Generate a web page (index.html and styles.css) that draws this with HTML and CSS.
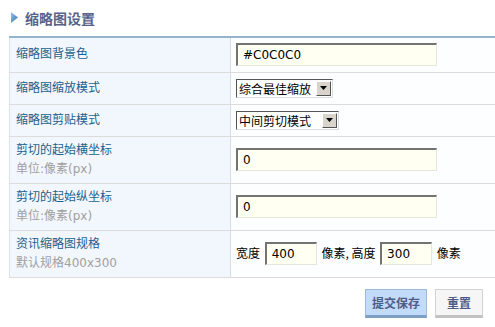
FILE: index.html
```html
<!DOCTYPE html>
<html lang="zh-CN">
<head>
  <meta charset="UTF-8">
  <title>缩略图设置</title>
  <link rel="stylesheet" href="styles.css">
</head>
<body>
  <div class="panel">
    <h3 class="panel-title">
      <svg class="arrow" width="7" height="11" viewBox="0 0 7 11">
        <defs>
          <linearGradient id="ag" x1="0" y1="0" x2="1" y2="1">
            <stop offset="0" stop-color="#9cc4ec"/>
            <stop offset="1" stop-color="#2f6fb8"/>
          </linearGradient>
        </defs>
        <polygon points="0,0 7,5.5 0,11" fill="url(#ag)"/>
      </svg>
      缩略图设置
    </h3>

    <!-- 设置表 -->
    <table class="form-table">
      <tr class="row-sm">
        <th>缩略图背景色</th>
        <td><input type="text" class="txt" value="#C0C0C0"></td>
      </tr>
      <tr class="row-xs">
        <th>缩略图缩放模式</th>
        <td>
          <span class="sel">
            <select><option>综合最佳缩放</option></select>
            <span class="sel-btn"><svg width="7" height="4" viewBox="0 0 7 4"><polygon points="0,0 7,0 3.5,4" fill="#000"/></svg></span>
          </span>
        </td>
      </tr>
      <tr class="row-xs">
        <th>缩略图剪贴模式</th>
        <td>
          <span class="sel sel-wide">
            <select><option>中间剪切模式</option></select>
            <span class="sel-btn"><svg width="7" height="4" viewBox="0 0 7 4"><polygon points="0,0 7,0 3.5,4" fill="#000"/></svg></span>
          </span>
        </td>
      </tr>
      <tr class="row-lg">
        <th>剪切的起始横坐标<span class="hint">单位:像素(px)</span></th>
        <td><input type="text" class="txt" value="0"></td>
      </tr>
      <tr class="row-lg">
        <th>剪切的起始纵坐标<span class="hint">单位:像素(px)</span></th>
        <td><input type="text" class="txt" value="0"></td>
      </tr>
      <tr class="row-lg">
        <th>资讯缩略图规格<span class="hint">默认规格400x300</span></th>
        <td class="size-cell">
          宽度 <input type="text" class="txt txt-sm" value="400"> 像素, 高度 <input type="text" class="txt txt-sm" value="300"> 像素
        </td>
      </tr>
    </table>

    <div class="actions">
      <button class="btn btn-primary">提交保存</button>
      <button class="btn">重置</button>
    </div>
  </div>
</body>
</html>
```

FILE: styles.css
```css
/* Reset minimal */
* { box-sizing: border-box; margin: 0; padding: 0; }

body {
  font-family: "DejaVu Sans", "Noto Sans CJK SC", sans-serif;
  font-size: 12px;
  color: #000;
  background: #fff;
}

.panel {
  padding-left: 9px;
}

/* Titre */
.panel-title {
  display: flex;
  align-items: center;
  gap: 7px;
  height: 36px;
  padding-left: 2px;
  padding-bottom: 1px;
  font-family: "Noto Sans CJK SC", sans-serif;
  font-size: 14px;
  font-weight: bold;
  color: #57628a;
}
.arrow { display: block; }

/* Table */
.form-table {
  width: 100%;
  border-collapse: collapse;
  border-top: 2px solid #93b4cc;
}
.form-table th,
.form-table td {
  border-bottom: 1px solid #dcdcdc;
  vertical-align: middle;
}
.form-table th {
  width: 221px;
  padding: 0 6px;
  text-align: left;
  font-weight: normal;
  color: #1d5f8c;
  line-height: 19px;
  background: #f2f7fd;
  border-left: 1px solid #dde3ea;
  border-right: 1px solid #d3dde8;
}
.form-table td {
  padding: 0 5px;
  background: #fdfeff;
}
.row-sm th, .row-sm td { height: 35px; }
.row-xs th, .row-xs td { height: 32px; }
.row-lg th, .row-lg td { height: 47px; }

.hint {
  display: block;
  color: #a0a0a0;
}

/* Champs */
.txt {
  width: 201px;
  height: 23px;
  padding: 0 3px 0 5px;
  font-family: "DejaVu Sans", sans-serif;
  font-size: 12px;
  color: #000;
  background: #fffff2;
  border-top: 2px solid #737373;
  border-left: 2px solid #737373;
  border-right: 1px solid #e6e6dc;
  border-bottom: 1px solid #e6e6dc;
  outline: none;
}
.txt-sm {
  width: 52px;
  margin: 0 2px;
}
.size-cell {
  white-space: nowrap;
  font-family: "Noto Sans CJK SC", sans-serif;
}

/* Liste déroulante façon Windows */
.sel {
  display: inline-flex;
  align-items: center;
  width: 97px;
  height: 19px;
  border-top: 1px solid #555;
  border-left: 1px solid #555;
  border-right: 1px solid #ddd;
  border-bottom: 1px solid #ddd;
  background: #fff;
}
.sel-wide { width: 103px; }
.sel select {
  flex: 1;
  min-width: 0;
  height: 17px;
  padding-left: 2px;
  font-family: "Noto Sans CJK SC", sans-serif;
  font-size: 12px;
  color: #000;
  border: none;
  background: transparent;
  appearance: none;
  -webkit-appearance: none;
  outline: none;
}
.sel-btn {
  display: flex;
  align-items: center;
  justify-content: center;
  width: 15px;
  height: 15px;
  margin-right: 1px;
  background: #d8d4cc;
  border-top: 1px solid #fff;
  border-left: 1px solid #fff;
  border-right: 1px solid #555;
  border-bottom: 1px solid #555;
}

/* Boutons */
.actions {
  display: flex;
  justify-content: flex-end;
  gap: 8px;
  padding: 11px 12px 0 0;
}
.btn {
  width: 48px;
  height: 29px;
  padding: 0;
  white-space: nowrap;
  font-family: "Noto Sans CJK SC", sans-serif;
  font-size: 12px;
  font-weight: bold;
  color: #4f5d86;
  background: #f6f6f6;
  border: 1px solid #d2d2d2;
  border-bottom: 3px solid #c2c2c2;
  cursor: pointer;
}
.btn-primary {
  width: 62px;
  background: #c3dbfb;
  border-color: #9cbad8;
  border-bottom-color: #7e9fc4;
}
```
